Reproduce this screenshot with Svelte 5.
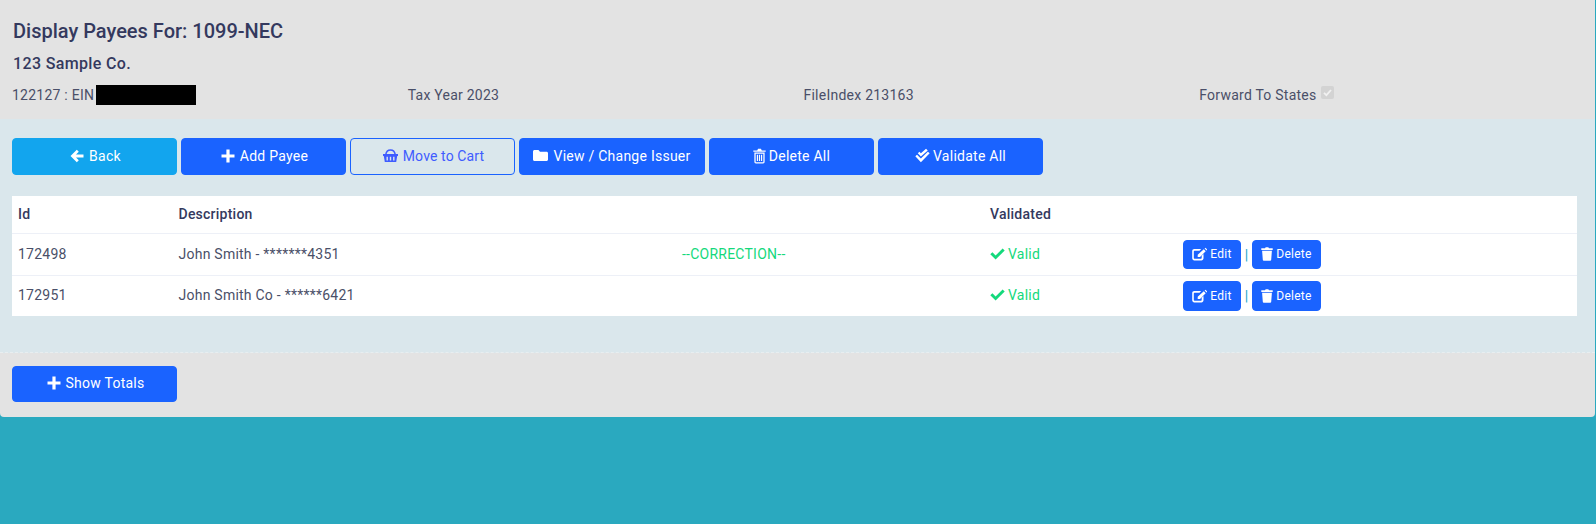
<script>
  const rows = [
    { id: '172498', description: 'John Smith - *******4351', note: '--CORRECTION--' },
    { id: '172951', description: 'John Smith Co - ******6421', note: '' }
  ]
</script>

{#snippet plus()}
  <svg class="icon" viewBox="0 0 14 14" width="14" height="14"><path d="M5.4.5h3.2v4.900H13.500v3.200H8.600V13.500H5.400V8.600H.5V5.400h4.900z" fill="currentColor" /></svg>
{/snippet}

<div class="page">
  <div class="card">
    <header class="head">
      <h1>Display Payees For: 1099-NEC</h1>
      <h2>123 Sample Co.</h2>
      <div class="info">
        <div class="ein">122127 : EIN<span class="redact"></span></div>
        <div>Tax Year 2023</div>
        <div>FileIndex 213163</div>
        <div class="forward">Forward To States <span class="checkbox"><svg viewBox="0 0 13 13" width="13" height="13"><path d="M3 6.800 5.400 9.200 10 4" fill="none" stroke="#f1f1f1" stroke-width="1.800" /></svg></span></div>
      </div>
    </header>

    <section class="body">
      <div class="actions">
        <button class="btn info-btn wide">
          <svg class="icon" viewBox="0 0 14 14" width="14" height="14"><path d="M6.800.8 8.800 2.800 6 5.500H13.500V8.500H6L8.800 11.200 6.800 13.200.5 7z" fill="currentColor" /></svg>
          Back
        </button>
        <button class="btn wide">{@render plus()} Add Payee</button>
        <button class="btn outline wide">
          <svg class="icon" viewBox="0 0 15 13" width="15" height="13">
            <path d="M2.800 5.500C3.200 2.700 5 1 7.500 1S11.800 2.700 12.200 5.500" fill="none" stroke="currentColor" stroke-width="1.500" />
            <path d="M0 5H15V7H14.200L13.200 13H1.800L.8 7H0zM3.500 7.800V11.500H4.900V7.800zM6.800 7.800V11.500H8.200V7.800zM10.100 7.800V11.500H11.500V7.800z" fill="currentColor" fill-rule="evenodd" />
          </svg>
          Move to Cart
        </button>
        <button class="btn view">
          <svg class="icon" viewBox="0 0 15 13" width="15" height="13"><path d="M1.500 1H5.500L7 2.800H13.500C14.300 2.800 15 3.400 15 4.200V10.500C15 11.300 14.300 12 13.500 12H1.500C.7 12 0 11.300 0 10.500V2.500C0 1.700.7 1 1.500 1z" fill="currentColor" /></svg>
          View / Change Issuer
        </button>
        <button class="btn all">
          <svg class="icon" viewBox="0 0 12 15" width="13" height="16"><path d="M3.800 2.300 4.700.6H7.300L8.200 2.300H11.800V3.600H.2V2.300zM1.200 4.300H10.800V13C10.800 13.900 10.200 14.500 9.400 14.500H2.600C1.800 14.500 1.200 13.900 1.200 13zM2.400 5.300V13.300H9.600V5.300zM3.500 6.300H4.600V12.300H3.500zM5.450 6.300H6.550V12.300H5.450zM7.400 6.300H8.500V12.300H7.400z" fill="currentColor" fill-rule="evenodd" /></svg>
          Delete All
        </button>
        <button class="btn all">
          <svg class="icon" viewBox="0 0 14 14" width="15" height="15"><path d="M.3 7.800 1.900 6.200 5.500 9.800 12 3.400 13.700 5 5.500 13.300zM2.600 5 4.100 3.500 5.500 4.900 10.300.7 11.900 2.300 5.500 8z" fill="currentColor" /></svg>
          Validate All
        </button>
      </div>

      <div class="table">
        <div class="row th">
          <div>Id</div>
          <div>Description</div>
          <div></div>
          <div>Validated</div>
          <div></div>
        </div>
        {#each rows as row}
          <div class="row">
            <div>{row.id}</div>
            <div>{row.description}</div>
            <div class="green">{row.note}</div>
            <div class="green valid">
              <svg class="icon" viewBox="0 0 15 12" width="15" height="12"><path d="M.3 6.300 2.400 4.200 5.600 7.400 12.600.4 14.700 2.500 5.600 11.600z" fill="currentColor" /></svg>
              Valid
            </div>
            <div class="row-actions">
              <button class="btn small edit">
                <svg class="icon" viewBox="0 0 15 14" width="15" height="14"><path d="M11.800 2.300 13.700 4.200 8 10H5.700V7.800zM12.600 1.500 13.400.7 15.300 2.600 14.500 3.400zM2.300 2H9.200L7.500 3.700H2.500C2.100 3.700 1.800 4 1.800 4.400V11C1.800 11.400 2.100 11.700 2.500 11.700H9C9.400 11.700 9.700 11.400 9.700 11V8.800L11.500 7V11.300C11.500 12.500 10.600 13.400 9.400 13.400H2.300C1.100 13.400.2 12.500.2 11.300V4.100C.2 2.900 1.100 2 2.300 2z" fill="currentColor" /></svg>
                Edit
              </button>
              <span class="sep">|</span>
              <button class="btn small del">
                <svg class="icon" viewBox="0 0 12 14" width="12" height="14"><path d="M4 1.300 4.700.3H7.300L8 1.300H11.700V3H.3V1.300zM1.100 3.800H10.900L10.200 12.700C10.100 13.400 9.600 13.800 9 13.800H3C2.400 13.800 1.900 13.400 1.800 12.700z" fill="currentColor" /></svg>
                Delete
              </button>
            </div>
          </div>
        {/each}
      </div>
    </section>

    <footer class="foot">
      <button class="btn wide">{@render plus()} Show Totals</button>
    </footer>
  </div>
</div>

<style>
  :global(body) {
    margin: 0;
    background: #2aa9bf;
  }

  .page {
    height: 524px;
    padding-right: 1px;
    font-family: Roboto, "Liberation Sans", sans-serif;
    font-size: 14px;
    color: #4a4f68;
    letter-spacing: 0.24px;
  }

  .card {
    background: #e3e3e3;
    border-radius: 0 0 4px 4px;
    overflow: hidden;
  }

  .head {
    height: 119px;
    box-sizing: border-box;
    padding: 20px 12px 0;
  }

  h1 {
    margin: 0 0 0 1px;
    font-size: 20px;
    line-height: 22px;
    font-weight: 500;
    letter-spacing: 0;
    color: #34395e;
  }

  h2 {
    margin: 12px 0 0 1px;
    font-size: 16px;
    line-height: 20px;
    font-weight: 500;
    letter-spacing: 0.35px;
    color: #34395e;
  }

  .info {
    display: grid;
    grid-template-columns: repeat(4, 395.75px);
    margin-top: 11px;
    line-height: 20px;
  }

  .ein {
    display: flex;
    align-items: center;
    gap: 2px;
  }

  .redact {
    width: 100px;
    height: 20px;
    background: #000;
  }

  .forward {
    display: flex;
    gap: 4px;
  }

  .checkbox {
    width: 13px;
    height: 13px;
    margin-top: 1px;
    border-radius: 2px;
    background: #d3d3d3;
  }

  .checkbox svg {
    display: block;
  }

  .body {
    height: 234px;
    box-sizing: border-box;
    padding: 19px 18px 0 12px;
    background: #dae7ec;
    border-bottom: 1px dashed #e8eef0;
  }

  .actions {
    display: flex;
    gap: 4px;
  }

  .btn {
    display: inline-flex;
    align-items: center;
    justify-content: center;
    gap: 5px;
    box-sizing: border-box;
    height: 37px;
    padding: 0 0 2px 2px;
    border: 1px solid #1a63ff;
    border-radius: 4px;
    background: #1a63ff;
    color: #fff;
    font: inherit;
    letter-spacing: 0.25px;
  }

  .icon {
    display: block;
    flex-shrink: 0;
  }

  .wide {
    width: 165px;
  }

  .view {
    width: 186px;
    padding-left: 0;
    gap: 5px;
  }

  .all {
    width: 165px;
    padding-left: 0;
    gap: 3px;
  }

  .info-btn {
    border-color: #12a5ee;
    background: #12a5ee;
  }

  .outline {
    background: transparent;
    color: #3f5cff;
    letter-spacing: 0.12px;
  }

  .table {
    margin-top: 21px;
    background: #fff;
  }

  .row {
    display: grid;
    grid-template-columns: 160.5px 503.5px 308px 193px 1fr;
    align-items: center;
    box-sizing: border-box;
    height: 41px;
    padding-left: 6px;
    padding-bottom: 2px;
    border-top: 1px solid #edf0f7;
  }

  .row:nth-child(2) {
    height: 42px;
  }

  .th {
    height: 37px;
    border-top: 0;
    color: #34395e;
    font-weight: 500;
  }

  .green {
    color: #14d97c;
  }

  .valid {
    display: flex;
    align-items: center;
    gap: 3px;
  }

  .row-actions {
    display: flex;
    align-items: center;
    margin-bottom: -2px;
  }

  .sep {
    width: 11px;
    text-align: center;
    color: #12a5c8;
  }

  .small {
    height: 29px;
    padding: 0 0 1px;
    font-size: 12px;
    gap: 3px;
  }

  .row:last-child .small {
    height: 30px;
  }

  .edit {
    width: 58px;
  }

  .del {
    width: 69px;
  }

  .foot {
    height: 64px;
    box-sizing: border-box;
    padding: 13px 12px 0;
  }

  .foot .btn {
    height: 36px;
  }
</style>
